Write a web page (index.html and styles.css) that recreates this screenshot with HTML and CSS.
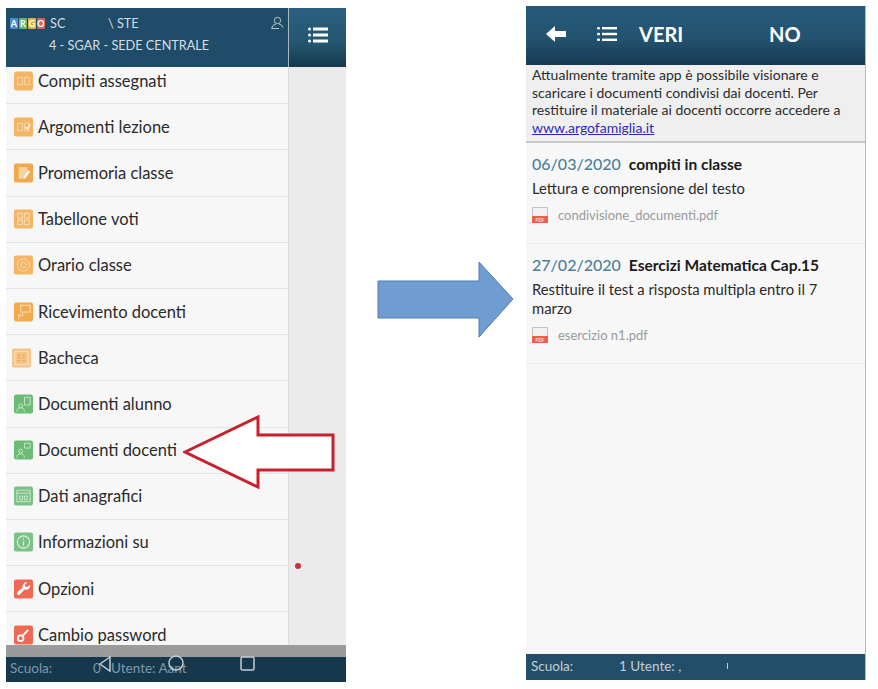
FILE: index.html
```html
<!DOCTYPE html>
<html lang="en">
<head>
    <meta charset="UTF-8">
    <title>Documenti docenti</title>
    <link rel="stylesheet" href="styles.css">
</head>
<body>
<div class="page">
    <div class="phone phone-menu">
        <div class="menu-top">
            <div class="school">
                <div class="school-line">
                    <span class="logo"><b class="l-a">A</b><b class="l-r">R</b><b class="l-g">G</b><b class="l-o">O</b></span>
                    <span class="sc">SC</span><span class="ste">\ STE</span>
                </div>
                <div class="school-sub">4 - SGAR - SEDE CENTRALE</div>
                <svg class="user-ico" viewBox="0 0 14 14" width="14" height="14" fill="none" stroke="#b9c5cb" stroke-width="1">
                    <circle cx="7.5" cy="4.5" r="3.2"/>
                    <path d="M6 8 3 9.5 1.5 12.5H9M9 8l3 1.500.8 2"/>
                </svg>
            </div>
            <div class="menu-btn">
                <svg viewBox="0 0 20 16" width="20" height="16" fill="#fff">
                    <rect x="0" y="0.500" width="3" height="3" rx="1.500"/><rect x="5" y="0.500" width="15" height="3"/>
                    <rect x="0" y="6.500" width="3" height="3" rx="1.500"/><rect x="5" y="6.500" width="15" height="3"/>
                    <rect x="0" y="12.500" width="3" height="3" rx="1.500"/><rect x="5" y="12.500" width="15" height="3"/>
                </svg>
            </div>
        </div>
        <div class="menu-body">
            <div class="menu-list">
                <div class="menu-scroll">
                    <div class="row"><svg class="ico" viewBox="0 0 20 20"><rect width="20" height="20" rx="3" fill="#f4b565"/><path d="M4 6h5v8H4zM11 6h5v8h-5z" fill="none" stroke="#fad9ac" stroke-width="1"/></svg>Compiti assegnati</div>
                    <div class="row"><svg class="ico" viewBox="0 0 20 20"><rect width="20" height="20" rx="2" fill="#f4b565"/><path d="M4 6h5v8H4zM11 6h5v8h-5z" fill="none" stroke="#fad9ac" stroke-width="1"/><path d="m12 10 2 2 3-5" fill="none" stroke="#fff" stroke-width="1.300"/></svg>Argomenti lezione</div>
                    <div class="row"><svg class="ico" viewBox="0 0 20 20"><rect width="20" height="20" rx="2" fill="#f0a94e"/><path d="M5 4h9v4l-4 6-1 2H5z" fill="#f8d29f"/><path d="m10 14 5-7 2 1.500-5 7-2 .5z" fill="#fff"/></svg>Promemoria classe</div>
                    <div class="row"><svg class="ico" viewBox="0 0 20 20"><rect width="20" height="20" rx="2" fill="#f4b565"/><path d="M4 4h5v5H4zM11 4h5v5h-5zM4 11h5v5H4zM11 11h5v5h-5z" fill="none" stroke="#fbe0bb" stroke-width="1"/></svg>Tabellone voti</div>
                    <div class="row"><svg class="ico" viewBox="0 0 20 20"><rect width="20" height="20" rx="2" fill="#f4b565"/><circle cx="10" cy="10" r="6.500" fill="none" stroke="#fad9ac" stroke-width="1"/><circle cx="10" cy="10" r="3" fill="none" stroke="#fad9ac" stroke-width="1"/></svg>Orario classe</div>
                    <div class="row"><svg class="ico" viewBox="0 0 20 20"><rect width="20" height="20" rx="2" fill="#f4a94f"/><path d="M7 3h10v7H7zM9 10v4M5 12v6M5 14h5" fill="none" stroke="#fbdcb2" stroke-width="1.200"/></svg>Ricevimento docenti</div>
                    <div class="row"><svg class="ico ico-wide" viewBox="0 0 20 20"><rect width="20" height="20" rx="2" fill="#f5c486"/><rect x="3" y="3" width="14" height="14" fill="none" stroke="#fbe3c4" stroke-width="1"/><path d="M6 7h3M11 7h3M6 10h3M11 10h3M6 13h3M11 13h3" stroke="#e39f50" stroke-width="1"/></svg>Bacheca</div>
                    <div class="row"><svg class="ico" viewBox="0 0 20 20"><rect width="20" height="20" rx="2" fill="#6cbc76"/><path d="M11 3h6v8h-6zM7 10a2 2 0 1 1 0 4 2 2 0 0 1 0-4zM3 18c0-3 2-4 4-4s4 1 4 4" fill="none" stroke="#c6e6ca" stroke-width="1"/></svg>Documenti alunno</div>
                    <div class="row"><svg class="ico" viewBox="0 0 20 20"><rect width="20" height="20" rx="2" fill="#6cbc76"/><path d="M11 3h6v5h-6zM7 9a2 2 0 1 1 0 4 2 2 0 0 1 0-4zM3 18c0-3 2-4 4-4s4 1 4 4" fill="none" stroke="#c6e6ca" stroke-width="1"/></svg>Documenti docenti</div>
                    <div class="row"><svg class="ico" viewBox="0 0 20 20"><rect width="20" height="20" rx="2" fill="#7cc285"/><path d="M3 4h14v12H3zM3 7h14M6 10h3v4H6zM11 10h3v4h-3z" fill="none" stroke="#cbe8cf" stroke-width="1"/></svg>Dati anagrafici</div>
                    <div class="row"><svg class="ico" viewBox="0 0 20 20"><rect width="20" height="20" rx="2" fill="#7cc285"/><circle cx="10" cy="10" r="6.500" fill="none" stroke="#e2f3e4" stroke-width="1.200"/><path d="M10 6v1.500M10 9v5" stroke="#e2f3e4" stroke-width="1.200"/></svg>Informazioni su</div>
                    <div class="row"><svg class="ico" viewBox="0 0 20 20"><rect width="20" height="20" rx="2" fill="#ef6a55"/><path d="M17 5.500a4.500 4.500 0 0 1-6 5L6 16a1.800 1.800 0 0 1-2.500-2.500l5.500-5a4.500 4.500 0 0 1 5-5.500l-2.500 2.500.5 2 2 .5z" fill="#fff"/></svg>Opzioni</div>
                    <div class="row"><svg class="ico" viewBox="0 0 20 20"><rect width="20" height="20" rx="2" fill="#ef6a55"/><circle cx="7" cy="13.500" r="3" fill="none" stroke="#fff" stroke-width="1.800"/><path d="m9 11 6-6.500" stroke="#fff" stroke-width="2"/></svg>Cambio password</div>
                </div>
            </div>
            <div class="menu-side"></div>
        </div>
        <div class="gray-strip"></div>
        <div class="status status-dark">
            <span class="status-school">Scuola:</span><span class="status-num">0</span><span class="status-user">Utente: Aant</span>
        </div>
        <svg class="nav-keys" viewBox="0 0 180 20" width="180" height="20" fill="none" stroke="#c3ccd1" stroke-width="1.500">
            <path d="M19 2 9 9l10 7z"/>
            <circle cx="85" cy="8" r="7"/>
            <rect x="150" y="2" width="13" height="13" rx="1.500"/>
        </svg>
        <i class="dot"></i>
    </div>

    <div class="arrow-col">
        <svg class="blue-arrow" viewBox="0 0 137 77" width="137" height="77">
            <path d="M1 20h101V1l34 37-34 38V57H1z" fill="#6f9dd2" stroke="#4f7db5" stroke-width="1"/>
        </svg>
    </div>

    <div class="phone phone-docs">
        <div class="docs-top">
            <svg viewBox="0 0 20 16" width="20" height="16" fill="#fff" class="back-ico"><path d="M0 8 9 0v5h11v6H9v5z"/></svg>
            <svg viewBox="0 0 20 16" width="20" height="16" fill="#fff" class="list-ico">
                <rect x="0" y="1" width="3" height="2.400" rx="1"/><rect x="5" y="1" width="15" height="2.400"/>
                <rect x="0" y="6.800" width="3" height="2.400" rx="1"/><rect x="5" y="6.800" width="15" height="2.400"/>
                <rect x="0" y="12.600" width="3" height="2.400" rx="1"/><rect x="5" y="12.600" width="15" height="2.400"/>
            </svg>
            <span class="docs-title">VERI</span><span class="docs-title docs-title-end">NO</span>
        </div>
        <div class="notice">Attualmente tramite app è possibile visionare e scaricare i documenti condivisi dai docenti. Per restituire il materiale ai docenti occorre accedere a <a href="#">www.argofamiglia.it</a></div>
        <div class="doc-list">
            <div class="doc">
                <div class="doc-head"><span class="doc-date">06/03/2020</span><span class="doc-name">compiti in classe</span></div>
                <div class="doc-text">Lettura e comprensione del testo</div>
                <div class="doc-file">
                    <svg class="pdf" viewBox="0 0 16 16" width="16" height="16"><path d="M.5.500h15v15H.5z" fill="#f1f1f1" stroke="#c4c4c4"/><rect y="9" width="16" height="7" fill="#e8604c"/><text x="8" y="14.500" class="pdf-label">PDF</text></svg>
                    condivisione_documenti.pdf
                </div>
            </div>
            <div class="doc">
                <div class="doc-head"><span class="doc-date">27/02/2020</span><span class="doc-name">Esercizi Matematica Cap.15</span></div>
                <div class="doc-text">Restituire il test a risposta multipla entro il 7 marzo</div>
                <div class="doc-file">
                    <svg class="pdf" viewBox="0 0 16 16" width="16" height="16"><path d="M.5.500h15v15H.5z" fill="#f1f1f1" stroke="#c4c4c4"/><rect y="9" width="16" height="7" fill="#e8604c"/><text x="8" y="14.500" class="pdf-label">PDF</text></svg>
                    esercizio n1.pdf
                </div>
            </div>
        </div>
        <div class="status status-blue">
            <span class="status-school">Scuola:</span><span class="status-user">1 Utente: ,</span><i class="tick"></i>
        </div>
    </div>
</div>

<svg class="red-arrow" viewBox="0 0 154 74" width="154" height="74">
    <path d="M2 37 75 2v18h75v35H75v17z" fill="#fff" stroke="#c9202e" stroke-width="3"/>
</svg>
</body>
</html>
```

FILE: styles.css
```css
html, body {
    margin: 0;
    background: #fff;
}
body {
    font-family: Lato, "Open Sans", sans-serif;
    color: #2a2a2a;
    position: relative;
    width: 878px;
    height: 689px;
    overflow: hidden;
}
.page {
    display: flex;
    align-items: flex-start;
    padding-left: 6px;
}
.phone {
    width: 340px;
    height: 674px;
    display: flex;
    flex-direction: column;
    position: relative;
    overflow: hidden;
    box-sizing: border-box;
}
.phone-menu {
    margin-top: 8px;
}
.phone-docs {
    margin-top: 6px;
    background: #f7f7f7;
    border-right: 1px solid #b9b9b9;
}

/* left phone */
.menu-top {
    height: 59px;
    display: flex;
    flex: none;
}
.school {
    width: 282px;
    background: #1f4c68;
    color: #d5dee3;
    font-size: 12.700px;
    position: relative;
    box-sizing: border-box;
}
.school-line {
    display: flex;
    align-items: center;
    padding: 6px 0 0 4px;
    height: 18px;
}
.school-sub {
    padding: 5px 0 0 43px;
}
.logo {
    display: flex;
    gap: 1px;
    margin-right: 5px;
}
.logo b {
    width: 8px;
    height: 11px;
    font-size: 9px;
    line-height: 11px;
    text-align: center;
    color: #fff;
    border-radius: 1px;
}
.l-a { background: #4a90d0; }
.l-r { background: #6ab06a; }
.l-g { background: #e0b040; }
.l-o { background: #d8615a; }
.sc {
    width: 58px;
}
.user-ico {
    position: absolute;
    right: 4px;
    top: 8px;
}
.menu-btn {
    flex: 1;
    border-left: 1px solid #a9b6bd;
    background: linear-gradient(#2a5f80, #24566f 60%, #15384d);
    display: flex;
    justify-content: center;
    padding-top: 19px;
    box-sizing: border-box;
}
.menu-body {
    display: flex;
    flex: 1;
    min-height: 0;
}
.menu-list {
    width: 282px;
    background: #f7f7f7;
    overflow: hidden;
}
.menu-scroll {
    margin-top: -9px;
}
.row {
    height: 46.200px;
    box-sizing: border-box;
    border-bottom: 1px solid #e3e3e3;
    display: flex;
    align-items: center;
    gap: 5px;
    padding-left: 8px;
    font-size: 16.500px;
}
.ico {
    width: 19px;
    height: 20px;
    flex: none;
}
.ico-wide {
    margin-left: -2px;
    margin-right: 2px;
}
.menu-side {
    flex: 1;
    background: #ebebeb;
    border-left: 1px solid #dcdcdc;
}
.gray-strip {
    height: 12px;
    flex: none;
    background: #9b9b9b;
}
.status {
    height: 25px;
    flex: none;
    display: flex;
    align-items: center;
    font-size: 13.500px;
    padding: 0 0 4px 4px;
    box-sizing: border-box;
}
.status-dark {
    background: #15384c;
    color: #7f98a6;
}
.status-school {
    width: 83px;
}
.status-num {
    width: 18px;
}
.nav-keys {
    position: absolute;
    left: 85px;
    bottom: 7px;
}
.dot {
    position: absolute;
    left: 289px;
    top: 555px;
    width: 6px;
    height: 6px;
    border-radius: 50%;
    background: #c9303a;
}

/* middle */
.arrow-col {
    width: 180px;
    flex: none;
}
.blue-arrow {
    display: block;
    margin: 261px 0 0 31px;
}
.red-arrow {
    position: absolute;
    left: 183px;
    top: 415px;
}

/* right phone */
.docs-top {
    height: 59px;
    flex: none;
    background: linear-gradient(#26597a, #235370 55%, #163a50);
    display: flex;
    align-items: center;
    color: #fff;
    font-size: 20px;
    font-weight: 700;
    padding: 0 0 4px 20px;
    box-sizing: border-box;
}
.list-ico {
    margin-left: 31px;
}
.docs-title {
    margin-left: 22px;
    width: 43px;
}
.docs-title-end {
    margin-left: 87px;
}
.notice {
    background: #efefef;
    border-bottom: 2px solid #c8c8c8;
    font-size: 14px;
    line-height: 17.700px;
    padding: 1px 6px 3px 6px;
    color: #2c2c2c;
    height: 78px;
    box-sizing: border-box;
    flex: none;
}
.notice a {
    color: #2b2bb5;
}
.doc-list {
    flex: 1;
    min-height: 0;
}
.doc {
    padding: 11px 20px 20px 6px;
    border-bottom: 1px solid #ececec;
    font-size: 14.800px;
}
.doc-head {
    display: flex;
    align-items: baseline;
    gap: 8px;
    white-space: nowrap;
}
.doc-date {
    font-size: 16px;
    font-weight: 500;
    color: #4d7f9b;
}
.doc-name {
    font-size: 15.500px;
    font-weight: 700;
    color: #1a1a1a;
}
.doc-text {
    margin-top: 6px;
    line-height: 19px;
}
.doc-file {
    margin-top: 9px;
    display: flex;
    align-items: center;
    gap: 10px;
    font-size: 13px;
    color: #979b9d;
}
.pdf {
    flex: none;
}
.pdf-label {
    font-family: "Liberation Sans", sans-serif;
    font-size: 4.500px;
    font-weight: 700;
    fill: #fbd9d3;
    text-anchor: middle;
}
.status-blue {
    background: #224e68;
    color: #c5d0d6;
    padding: 0 0 3px 5px;
    height: 26px;
}
.status-blue .status-school {
    width: 88px;
}
.tick {
    width: 1px;
    height: 6px;
    margin-left: 46px;
    background: #c5d0d6;
}
```
